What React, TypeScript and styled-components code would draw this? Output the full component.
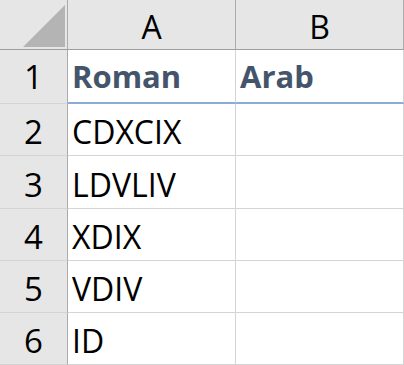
import React from "react";
import styled, { createGlobalStyle } from "styled-components";

const Global = createGlobalStyle`
  html, body { margin: 0; padding: 0; background: #ffffff; }
  body { font-family: "Open Sans", "Noto Sans", sans-serif; }
`;

const Sheet = styled.div`
  width: 404px;
  height: 365px;
  display: flex;
  flex-direction: column;
  overflow: hidden;
  background: #ffffff;
`;

const Row = styled.div<{ $h: number }>`
  display: grid;
  grid-template-columns: 68px 168px 168px;
  height: ${(p) => p.$h}px;
`;

const Corner = styled.div`
  box-sizing: border-box;
  background: #e6e6e6;
  border-right: 1px solid #ababab;
  border-bottom: 1px solid #9e9e9e;
  display: flex;
  justify-content: flex-end;
  align-items: flex-end;
  padding: 0 2px 2px 0;
`;

const Triangle = styled.div`
  width: 42px;
  height: 42px;
  background: #b4b4b4;
  clip-path: polygon(100% 0, 100% 100%, 0 100%);
`;

const ColHead = styled.div`
  box-sizing: border-box;
  background: #e6e6e6;
  border-right: 1px solid #ababab;
  border-bottom: 1px solid #9e9e9e;
  display: flex;
  justify-content: center;
  align-items: flex-end;
  padding-bottom: 6px;
  font-size: 32px;
  line-height: 32px;
  color: #000000;
`;

const RowHead = styled.div<{ $pb: number }>`
  box-sizing: border-box;
  background: #e6e6e6;
  border-right: 1px solid #ababab;
  border-bottom: 1px solid #d4d4d4;
  display: flex;
  justify-content: center;
  align-items: flex-end;
  padding-bottom: ${(p) => p.$pb}px;
  font-size: 33px;
  line-height: 32px;
  color: #000000;
`;

const Cell = styled.div<{ $title?: boolean; $pb: number }>`
  box-sizing: border-box;
  border-right: 1px solid #d4d4d4;
  border-bottom: ${(p) => (p.$title ? "2px solid #8ea9db" : "1px solid #d4d4d4")};
  display: flex;
  align-items: flex-end;
  padding: 0 0 ${(p) => p.$pb}px 4px;
  font-size: ${(p) => (p.$title ? 31 : 32)}px;
  line-height: 32px;
  font-weight: ${(p) => (p.$title ? 700 : 400)};
  color: ${(p) => (p.$title ? "#44546a" : "#000000")};
  white-space: nowrap;
`;

const data: { n: number; h: number; a: string }[] = [
  { n: 2, h: 52, a: "CDXCIX" },
  { n: 3, h: 53, a: "LDVLIV" },
  { n: 4, h: 52, a: "XDIX" },
  { n: 5, h: 52, a: "VDIV" },
  { n: 6, h: 52, a: "ID" },
];

export default function App() {
  return (
    <>
      <Global />
      <Sheet>
        <Row $h={50}>
          <Corner>
            <Triangle />
          </Corner>
          <ColHead>A</ColHead>
          <ColHead>B</ColHead>
        </Row>
        <Row $h={54}>
          <RowHead $pb={10}>1</RowHead>
          <Cell $title $pb={10}>Roman</Cell>
          <Cell $title $pb={10}>Arab</Cell>
        </Row>
        {data.map((r) => (
          <Row key={r.n} $h={r.h}>
            <RowHead $pb={7}>{r.n}</RowHead>
            <Cell $pb={7}>{r.a}</Cell>
            <Cell $pb={7}></Cell>
          </Row>
        ))}
      </Sheet>
    </>
  );
}
